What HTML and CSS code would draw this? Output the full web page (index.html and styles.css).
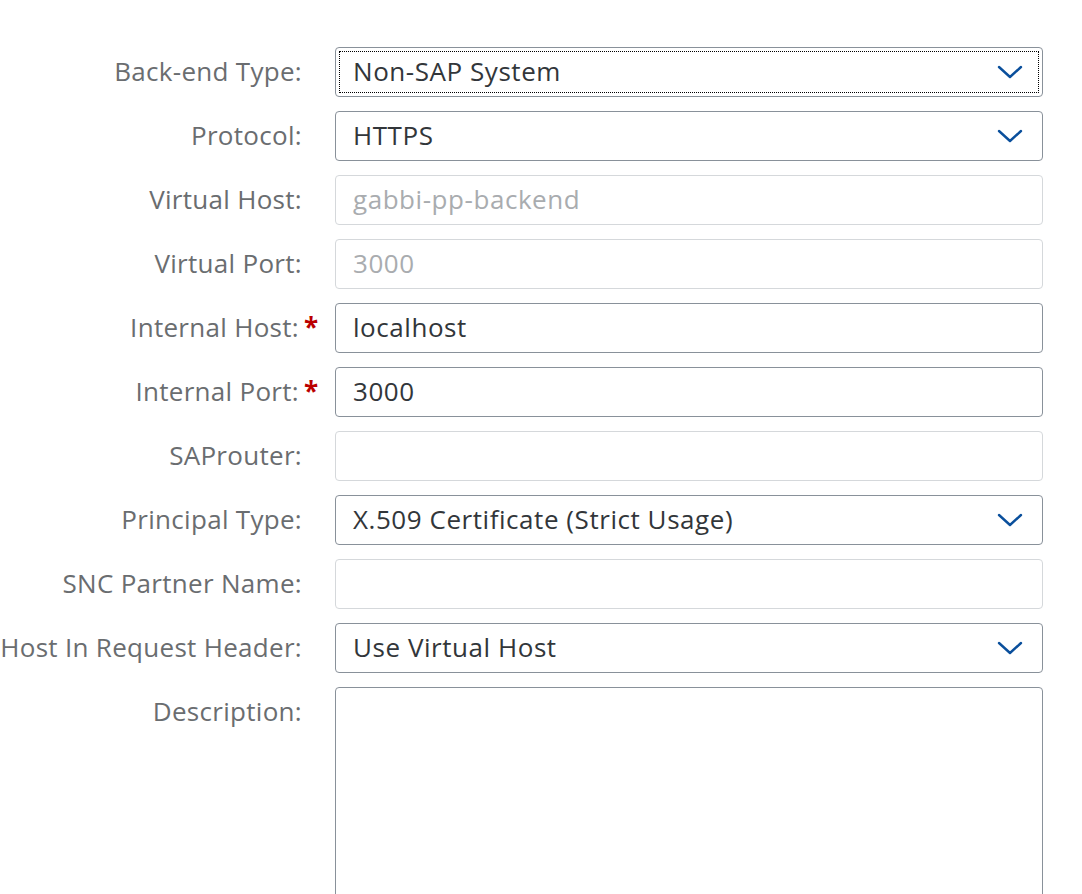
FILE: index.html
```html
<!DOCTYPE html>
<html>
<head>
<meta charset="utf-8">
<link rel="stylesheet" href="styles.css">
</head>
<body>
<form class="form">
  <div class="label">Back-end Type:</div>
  <div class="field select focused"><span class="value">Non-SAP System</span><svg class="chev" viewBox="0 0 26 14" width="26" height="14"><polyline points="2,2 13,12 24,2"/></svg></div>

  <div class="label">Protocol:</div>
  <div class="field select"><span class="value">HTTPS</span><svg class="chev" viewBox="0 0 26 14" width="26" height="14"><polyline points="2,2 13,12 24,2"/></svg></div>

  <div class="label">Virtual Host:</div>
  <div class="field readonly"><span class="value muted">gabbi-pp-backend</span></div>

  <div class="label">Virtual Port:</div>
  <div class="field readonly"><span class="value muted">3000</span></div>

  <div class="label required">Internal Host:</div>
  <div class="field"><span class="value">localhost</span></div>

  <div class="label required">Internal Port:</div>
  <div class="field"><span class="value">3000</span></div>

  <div class="label">SAProuter:</div>
  <div class="field readonly"></div>

  <div class="label">Principal Type:</div>
  <div class="field select"><span class="value">X.509 Certificate (Strict Usage)</span><svg class="chev" viewBox="0 0 26 14" width="26" height="14"><polyline points="2,2 13,12 24,2"/></svg></div>

  <div class="label">SNC Partner Name:</div>
  <div class="field readonly"></div>

  <div class="label">Host In Request Header:</div>
  <div class="field select"><span class="value">Use Virtual Host</span><svg class="chev" viewBox="0 0 26 14" width="26" height="14"><polyline points="2,2 13,12 24,2"/></svg></div>

  <div class="label top">Description:</div>
  <div class="field area"></div>
</form>
</body>
</html>
```
FILE: styles.css
```css
html, body {
  margin: 0;
  padding: 0;
  background: #ffffff;
}
body {
  font-family: "Open Sans", "Liberation Sans", sans-serif;
  overflow: hidden;
  height: 894px;
}
.form {
  display: grid;
  grid-template-columns: 302px 708px;
  grid-auto-rows: 50px;
  column-gap: 33px;
  row-gap: 14px;
  padding-top: 47px;
}
.label {
  position: relative;
  height: 50px;
  display: flex;
  align-items: center;
  justify-content: flex-end;
  font-size: 26px;
  line-height: 30px;
  padding-bottom: 3px;
  box-sizing: border-box;
  color: #6a6d70;
  white-space: nowrap;
  letter-spacing: 0.3px;
}
.label.required {
  padding-right: 3px;
}
.label.required::after {
  content: "*";
  position: absolute;
  left: calc(100% + 2px);
  top: 6px;
  line-height: normal;
  color: #bb0000;
  font-size: 26px;
  font-weight: bold;
  letter-spacing: 0;
}
.label.top {
  align-self: start;
}
.field {
  box-sizing: border-box;
  height: 50px;
  border: 1px solid #89919a;
  border-radius: 4px;
  background: #ffffff;
  display: flex;
  align-items: center;
  padding: 0 19px 0 17px;
}
.field.readonly {
  border-color: #d5d8db;
}
.field.focused {
  outline: 1px dotted #000000;
  outline-offset: -5px;
}
.field.area {
  height: 260px;
}
.value {
  flex: 1;
  font-size: 26px;
  line-height: 30px;
  padding-bottom: 3px;
  color: #32363a;
  white-space: nowrap;
  letter-spacing: 0.55px;
}
.value.muted {
  color: #a9acaf;
}
.chev {
  display: block;
  flex: none;
  fill: none;
  stroke: #0a4f9c;
  stroke-width: 2.4;
  stroke-linecap: round;
  stroke-linejoin: round;
}
```
